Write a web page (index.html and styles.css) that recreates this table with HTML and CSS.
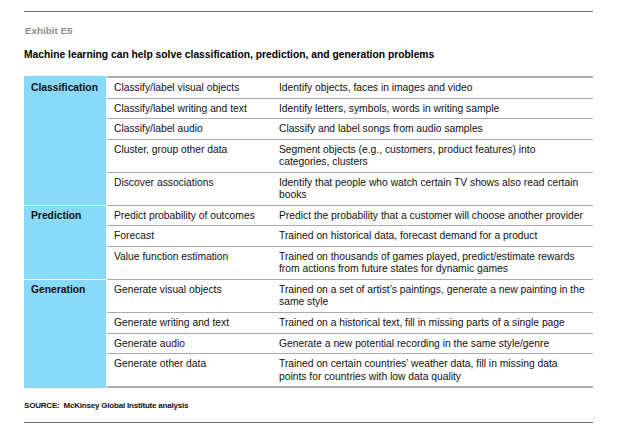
FILE: index.html
```html
<!DOCTYPE html>
<html lang="en">
<head>
<meta charset="utf-8">
<title>Exhibit E5</title>
<link rel="stylesheet" href="styles.css">
</head>
<body>
<div class="page">
  <div class="rule"></div>
  <div class="exhibit">Exhibit E5</div>
  <div class="title">Machine learning can help solve classification, prediction, and generation problems</div>
  <div class="table">
    <div class="section first">
      <div class="cat">Classification</div>
      <div class="rows">
        <div class="row"><div class="task">Classify/label visual objects</div><div class="desc">Identify objects, faces in images and video</div></div>
        <div class="row"><div class="task">Classify/label writing and text</div><div class="desc">Identify letters, symbols, words in writing sample</div></div>
        <div class="row"><div class="task">Classify/label audio</div><div class="desc">Classify and label songs from audio samples</div></div>
        <div class="row"><div class="task">Cluster, group other data</div><div class="desc">Segment objects (e.g., customers, product features) into<br>categories, clusters</div></div>
        <div class="row"><div class="task">Discover associations</div><div class="desc">Identify that people who watch certain TV shows also read certain<br>books</div></div>
      </div>
    </div>
    <div class="section">
      <div class="cat">Prediction</div>
      <div class="rows">
        <div class="row"><div class="task">Predict probability of outcomes</div><div class="desc">Predict the probability that a customer will choose another provider</div></div>
        <div class="row"><div class="task">Forecast</div><div class="desc">Trained on historical data, forecast demand for a product</div></div>
        <div class="row"><div class="task">Value function estimation</div><div class="desc">Trained on thousands of games played, predict/estimate rewards<br>from actions from future states for dynamic games</div></div>
      </div>
    </div>
    <div class="section last">
      <div class="cat">Generation</div>
      <div class="rows">
        <div class="row"><div class="task">Generate visual objects</div><div class="desc">Trained on a set of artist’s paintings, generate a new painting in the<br>same style</div></div>
        <div class="row"><div class="task">Generate writing and text</div><div class="desc">Trained on a historical text, fill in missing parts of a single page</div></div>
        <div class="row"><div class="task">Generate audio</div><div class="desc">Generate a new potential recording in the same style/genre</div></div>
        <div class="row"><div class="task">Generate other data</div><div class="desc">Trained on certain countries’ weather data, fill in missing data<br>points for countries with low data quality</div></div>
      </div>
    </div>
  </div>
  <div class="source">SOURCE:&nbsp; McKinsey Global Institute analysis</div>
  <div class="rule bottom"></div>
</div>
</body>
</html>
```

FILE: styles.css
```css
html, body {
  margin: 0;
  padding: 0;
  background: #ffffff;
}

.page {
  width: 569px;
  margin-left: 24px;
  padding-top: 11px;
  font-family: "Liberation Sans", Arial, sans-serif;
  color: #111111;
}

.rule {
  height: 1px;
  background: #6a6a6a;
}

.exhibit {
  margin-top: 13px;
  font-size: 9.8px;
  line-height: 12px;
  font-weight: bold;
  color: #8c8c8c;
  padding-left: 1px;
}

.title {
  margin-top: 12px;
  font-size: 10.3px;
  line-height: 12px;
  font-weight: bold;
  color: #000000;
}

.table {
  margin-top: 15px;
  font-size: 10.3px;
  line-height: 12.4px;
}

.section {
  display: flex;
}

.cat {
  width: 82px;
  flex: none;
  box-sizing: border-box;
  margin-right: 1px;
  background: #88daf8;
  font-weight: bold;
  color: #111111;
  padding: 4px 0 0 7px;
  border-top: 1px solid #ffffff;
}

.section.first .cat {
  border-top: 2px solid #88daf8;
}

.rows {
  flex: 1;
}

.row {
  display: flex;
  border-top: 1px solid #ababab;
  padding: 4px 0 3.2px;
}

.section.first .row:first-child {
  border-top: 2px solid #ababab;
}

.section.last .row:last-child {
  border-bottom: 2px solid #ababab;
}

.task {
  width: 165px;
  flex: none;
  padding-left: 7px;
  box-sizing: border-box;
}

.desc {
  flex: 1;
  padding-left: 7px;
  white-space: nowrap;
}

.source {
  margin-top: 13px;
  font-size: 8px;
  line-height: 10px;
  letter-spacing: -0.2px;
  color: #111111;
  font-weight: bold;
}

.rule.bottom {
  margin-top: 11px;
}
```
